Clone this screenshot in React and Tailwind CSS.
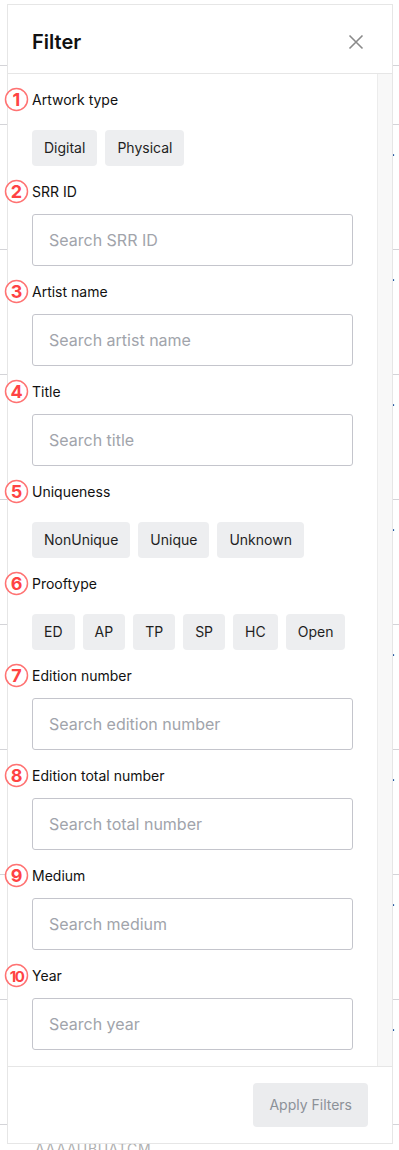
import React from "react";

const sections = [
  { label: "Artwork type", options: ["Digital", "Physical"] },
  { label: "SRR ID", placeholder: "Search SRR ID" },
  { label: "Artist name", placeholder: "Search artist name" },
  { label: "Title", placeholder: "Search title" },
  { label: "Uniqueness", options: ["NonUnique", "Unique", "Unknown"] },
  { label: "Prooftype", options: ["ED", "AP", "TP", "SP", "HC", "Open"] },
  { label: "Edition number", placeholder: "Search edition number" },
  { label: "Edition total number", placeholder: "Search total number" },
  { label: "Medium", placeholder: "Search medium" },
  { label: "Year", placeholder: "Search year" },
];

function Marker({ n }) {
  return (
    <svg
      width="25"
      height="25"
      viewBox="0 0 25 25"
      className="absolute -left-[28px] -top-[3px]"
    >
      <circle cx="12.5" cy="12.5" r="11" fill="#fff" stroke="#ff7373" strokeWidth="1.5" />
      <text
        x="12.5"
        y="18.5"
        textAnchor="middle"
        fontSize={n > 9 ? 15 : 18}
        fontWeight="700"
        letterSpacing={n > 9 ? "-1.5" : "0"}
        fill="#ff4343"
        fontFamily="Inter, sans-serif"
      >
        {n}
      </text>
    </svg>
  );
}

function Section({ s, n }) {
  return (
    <div className="mb-4">
      <div className="relative h-5 text-sm leading-5 text-[#111]">
        <Marker n={n} />
        {s.label}
      </div>
      {s.options ? (
        <div className="mt-5 flex gap-2">
          {s.options.map((o) => (
            <button
              key={o}
              className="h-9 px-3 rounded bg-[#edeef0] text-sm text-[#1f1f1f]"
            >
              {o}
            </button>
          ))}
        </div>
      ) : (
        <input
          className="mt-3 block w-full h-[52px] px-4 border border-[#c4c5cc] rounded-[3px] text-base placeholder:text-[#a1a4ab] outline-none"
          placeholder={s.placeholder}
        />
      )}
    </div>
  );
}

export default function App() {
  const rows = [0, 1, 2, 3, 4, 5, 6, 7];
  return (
    <div className="relative w-[399px] h-[1150px] overflow-hidden bg-white font-['Inter',sans-serif]">
      {/* table behind the modal */}
      <div className="h-[66px] border-b border-[#d4d4d8]"></div>
      <div className="h-[59px] border-b border-[#d4d4d8]"></div>
      {rows.map((r) => (
        <div key={r} className="h-[125px] border-b border-[#d4d4d8] flex justify-end pr-[4px] pt-[16px] text-sm leading-5">
          .
        </div>
      ))}
      <div className="pl-[35px] pt-[14px] text-sm tracking-wider text-[#b0b0b0]">AAAAUBUATCM</div>

      {/* filter modal */}
      <div className="absolute top-[4px] left-[7px] w-[386px] bg-white border border-[#e6e6e6] flex flex-col">
        <div className="h-[69px] border-b border-[#e6e6e6] flex items-center justify-between px-6 pt-[6px]">
          <h2 className="text-xl font-semibold text-[#111]">Filter</h2>
          <svg width="16" height="16" viewBox="0 0 16 16" className="mr-[4px]">
            <path d="M1.5 1.5 L14.5 14.5 M14.5 1.5 L1.5 14.5" stroke="#8a8a8a" strokeWidth="1.6" />
          </svg>
        </div>
        <div className="flex h-[992px]">
          <div className="flex-1 pl-6 pr-6 pt-4">
            {sections.map((s, i) => (
              <Section key={s.label} s={s} n={i + 1} />
            ))}
          </div>
          <div className="w-[15px] bg-[#f8f8f8] border-l border-[#ececec]"></div>
        </div>
        <div className="border-t border-[#e6e6e6] flex justify-end px-6 py-4">
          <button className="h-11 px-4 rounded bg-[#ebecee] text-sm text-[#8c9198]">
            Apply Filters
          </button>
        </div>
      </div>
    </div>
  );
}
